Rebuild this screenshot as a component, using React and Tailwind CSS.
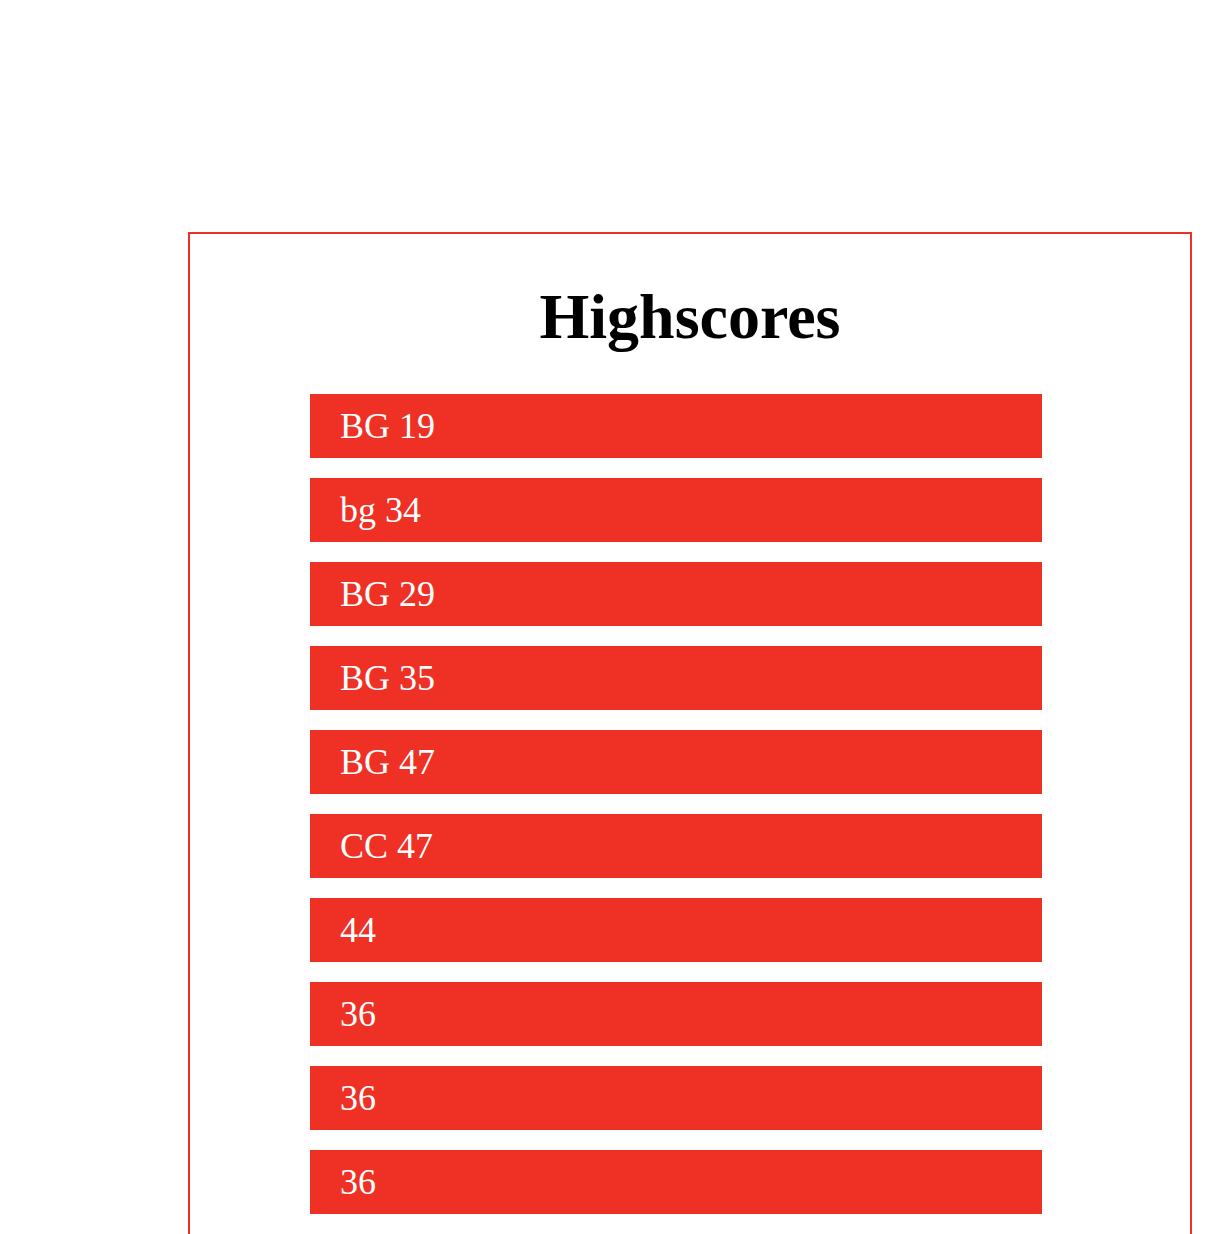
const scores = ['BG 19', 'bg 34', 'BG 29', 'BG 35', 'BG 47', 'CC 47', '44', '36', '36', '36']

export default function App() {
  return (
    <div className="h-[1234px] overflow-hidden bg-white font-['Liberation_Serif',_'Times_New_Roman',_serif]">
      <div className="ml-[188px] mt-[232px] w-[1004px] border-2 border-[#ee3124] pb-10">
        <h1 className="mt-[51px] text-center text-[64px] font-bold leading-[64px] text-black">Highscores</h1>
        <div className="ml-[120px] mt-[45px] flex w-[732px] flex-col gap-5">
          {scores.map((s, i) => (
            <div key={i} className="flex h-16 items-center bg-[#ee3124] pl-[30px] text-[36px] text-white">
              {s}
            </div>
          ))}
        </div>
      </div>
    </div>
  )
}
